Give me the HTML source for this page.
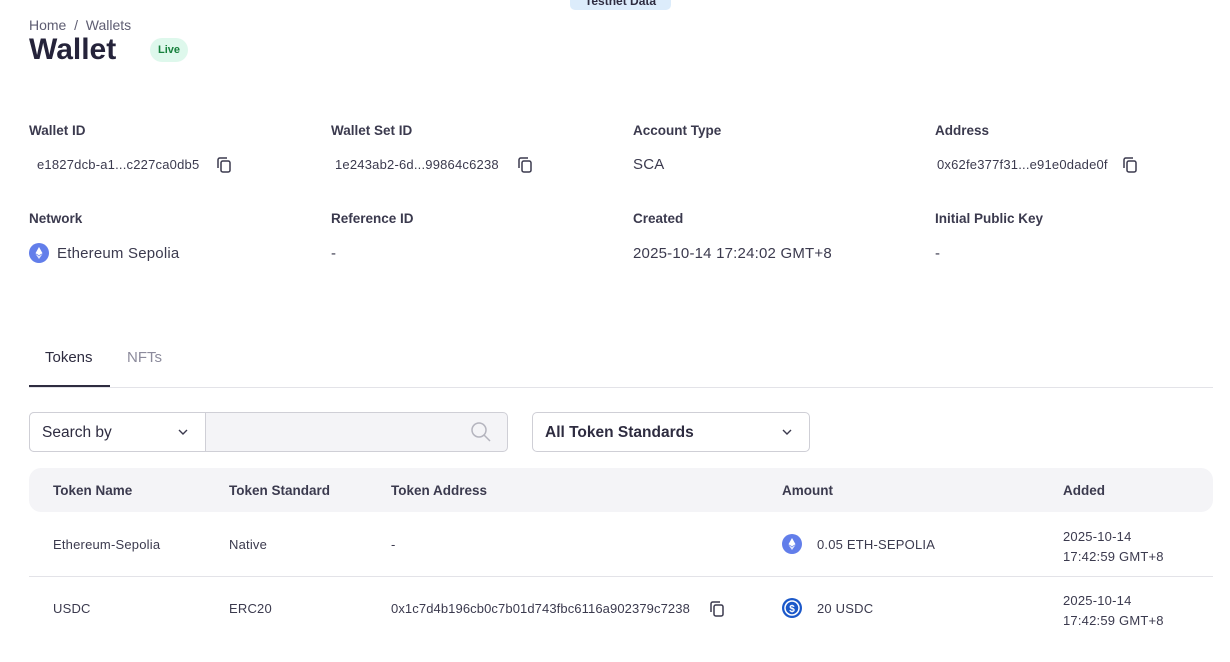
<!DOCTYPE html>
<html><head><meta charset="utf-8"><style>
*{margin:0;padding:0;box-sizing:border-box}
body{width:1230px;height:662px;overflow:hidden;background:#fff;font-family:"Liberation Sans",sans-serif;color:#2e2c40;position:relative}
.a{position:absolute;white-space:nowrap}
.lbl{font-size:13.5px;font-weight:bold;color:#3b3a4e}
.val{font-size:15px;color:#3b3a4e;letter-spacing:0.2px}
.sm{font-size:13px;color:#3b3a4e;letter-spacing:0.2px}
</style></head><body>
<div class="a" style="left:570px;top:-14px;width:101px;height:24px;background:#dcecfb;border-radius:5px;font-size:12px;font-weight:bold;color:#2e2c40;text-align:center;line-height:30px">Testnet Data</div>
<div class="a" style="left:29px;top:17px;font-size:14px;color:#5e5d72">Home &nbsp;/&nbsp; Wallets</div>
<div class="a" style="left:29px;top:33px;font-size:30px;font-weight:bold;color:#25233a">Wallet</div>
<div class="a" style="left:150px;top:38px;width:38px;height:24px;background:#def8ec;border-radius:12px;font-size:11px;font-weight:bold;color:#16803c;text-align:center;line-height:24px">Live</div>

<svg width="0" height="0" style="position:absolute"><defs><g id="cp"><rect x="5" y="5" width="9" height="11" rx="1.8" fill="none" stroke="#3b3a4e" stroke-width="1.5"/><path d="M2 12V3.8A1.8 1.8 0 0 1 3.8 2H11" fill="none" stroke="#3b3a4e" stroke-width="1.5"/></g></defs></svg>

<div class="a lbl" style="left:29px;top:123px">Wallet ID</div>
<div class="a lbl" style="left:331px;top:123px">Wallet Set ID</div>
<div class="a lbl" style="left:633px;top:123px">Account Type</div>
<div class="a lbl" style="left:935px;top:123px">Address</div>
<div class="a sm" style="left:37px;top:157px">e1827dcb-a1...c227ca0db5</div>
<svg class="a" style="left:216px;top:156px" width="17" height="18"><use href="#cp"/></svg>
<div class="a sm" style="left:335px;top:157px">1e243ab2-6d...99864c6238</div>
<svg class="a" style="left:517px;top:156px" width="17" height="18"><use href="#cp"/></svg>
<div class="a val" style="left:633px;top:156px">SCA</div>
<div class="a sm" style="left:937px;top:157px">0x62fe377f31...e91e0dade0f</div>
<svg class="a" style="left:1122px;top:156px" width="17" height="18"><use href="#cp"/></svg>

<div class="a lbl" style="left:29px;top:211px">Network</div>
<div class="a lbl" style="left:331px;top:211px">Reference ID</div>
<div class="a lbl" style="left:633px;top:211px">Created</div>
<div class="a lbl" style="left:935px;top:211px">Initial Public Key</div>
<svg class="a" style="left:29px;top:243px" width="20" height="20"><circle cx="10" cy="10" r="10" fill="#627eea"/><path d="M10 4L6.5 10.2 10 12.2 13.5 10.2Z" fill="#fff"/><path d="M10 13L6.5 11 10 16 13.5 11Z" fill="#fff" opacity=".8"/></svg>
<div class="a val" style="left:57px;top:245px">Ethereum Sepolia</div>
<div class="a val" style="left:331px;top:245px">-</div>
<div class="a val" style="left:633px;top:245px">2025-10-14 17:24:02 GMT+8</div>
<div class="a val" style="left:935px;top:245px">-</div>

<div class="a" style="left:45px;top:349px;font-size:15px;color:#2e2c40">Tokens</div>
<div class="a" style="left:127px;top:349px;font-size:15px;color:#8c8b9c">NFTs</div>
<div class="a" style="left:29px;top:387px;width:1184px;height:1px;background:#e3e3e8"></div>
<div class="a" style="left:29px;top:385px;width:81px;height:2px;background:#2e2c40"></div>

<div class="a" style="left:29px;top:412px;width:479px;height:40px;border:1px solid #cfcfd6;border-radius:5px;background:#f4f4f7"></div>
<div class="a" style="left:29px;top:412px;width:177px;height:40px;border:1px solid #cfcfd6;border-radius:5px 0 0 5px;background:#fff"></div>
<div class="a" style="left:42px;top:424px;font-size:15.5px;color:#2e2c40">Search by</div>
<svg class="a" style="left:177px;top:428px" width="12" height="8"><path d="M2 2l4 4 4-4" fill="none" stroke="#3b3a4e" stroke-width="1.4"/></svg>
<svg class="a" style="left:470px;top:421px" width="22" height="22"><circle cx="9" cy="9" r="7" fill="none" stroke="#b4b4be" stroke-width="1.5"/><path d="M14 14l6 6" stroke="#b4b4be" stroke-width="1.5"/></svg>
<div class="a" style="left:532px;top:412px;width:278px;height:40px;border:1px solid #cfcfd6;border-radius:5px"></div>
<div class="a" style="left:545px;top:424px;font-size:15.5px;font-weight:bold;color:#2e2c40">All Token Standards</div>
<svg class="a" style="left:781px;top:428px" width="12" height="8"><path d="M2 2l4 4 4-4" fill="none" stroke="#3b3a4e" stroke-width="1.4"/></svg>

<div class="a" style="left:29px;top:468px;width:1184px;height:44px;background:#f4f4f7;border-radius:12px"></div>
<div class="a lbl" style="left:53px;top:483px">Token Name</div>
<div class="a lbl" style="left:229px;top:483px">Token Standard</div>
<div class="a lbl" style="left:391px;top:483px">Token Address</div>
<div class="a lbl" style="left:782px;top:483px">Amount</div>
<div class="a lbl" style="left:1063px;top:483px">Added</div>

<div class="a sm" style="left:53px;top:537px">Ethereum-Sepolia</div>
<div class="a sm" style="left:229px;top:537px">Native</div>
<div class="a sm" style="left:391px;top:537px">-</div>
<svg class="a" style="left:782px;top:534px" width="20" height="20"><circle cx="10" cy="10" r="10" fill="#627eea"/><path d="M10 4L6.5 10.2 10 12.2 13.5 10.2Z" fill="#fff"/><path d="M10 13L6.5 11 10 16 13.5 11Z" fill="#fff" opacity=".8"/></svg>
<div class="a sm" style="left:817px;top:537px">0.05 ETH-SEPOLIA</div>
<div class="a sm" style="left:1063px;top:527px;line-height:20px">2025-10-14<br>17:42:59 GMT+8</div>
<div class="a" style="left:29px;top:576px;width:1184px;height:1px;background:#e3e3e8"></div>

<div class="a sm" style="left:391px;top:601px;letter-spacing:0.1px">0x1c7d4b196cb0c7b01d743fbc6116a902379c7238</div>
<div class="a sm" style="left:53px;top:601px">USDC</div>
<div class="a sm" style="left:229px;top:601px">ERC20</div>
<svg class="a" style="left:709px;top:600px" width="17" height="18"><use href="#cp"/></svg>
<svg class="a" style="left:782px;top:598px" width="20" height="20"><circle cx="10" cy="10" r="10" fill="#1b58c9"/><circle cx="10" cy="10" r="7" fill="none" stroke="#fff" stroke-width="1.5"/><text x="10" y="14" font-size="10" font-weight="bold" fill="#fff" text-anchor="middle" font-family="Liberation Sans">$</text></svg>
<div class="a sm" style="left:817px;top:601px">20 USDC</div>
<div class="a sm" style="left:1063px;top:591px;line-height:20px">2025-10-14<br>17:42:59 GMT+8</div>
</body></html>
